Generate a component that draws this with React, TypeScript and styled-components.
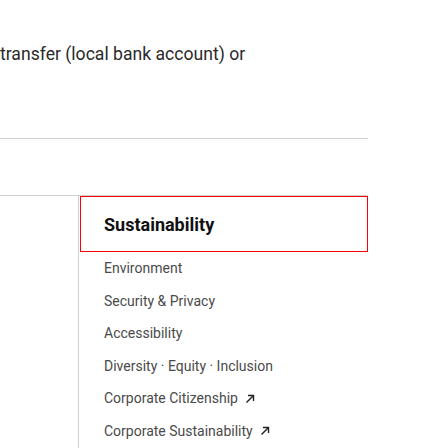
import React from "react";
import styled, { createGlobalStyle } from "styled-components";

const Global = createGlobalStyle`
  html, body { margin: 0; padding: 0; background: #fff; }
  body { font-family: Roboto, "Noto Sans", Arial, sans-serif; }
`;

const Page = styled.div`
  width: 448px;
  height: 448px;
  overflow: hidden;
`;

const Intro = styled.p`
  margin: 0;
  padding-top: 41px;
  height: 138px;
  box-sizing: border-box;
  font-size: 17.6px;
  line-height: 26px;
  color: #2a2a2a;
  white-space: nowrap;
`;

const Rule = styled.hr`
  width: 368px;
  margin: 0;
  border: 0;
  border-top: 1px solid #d0d0d0;
  height: 0;
`;

const Gap = styled.div`
  height: 56px;
`;

const Section = styled.div`
  width: 368px;
  border-top: 1px solid #d0d0d0;
  display: grid;
  grid-template-columns: 79px 1fr;
`;

const Aside = styled.div``;

const Column = styled.div`
  border-left: 1px solid #d0d0d0;
  height: 260px;
  margin-left: -1px;
  display: flex;
  flex-direction: column;
`;

const Heading = styled.div`
  height: 56px;
  box-sizing: border-box;
  border: 1px solid #ff0000;
  margin-left: 1px;
  padding-left: 23px;
  display: flex;
  align-items: center;
  font-size: 18px;
  font-weight: 700;
  color: #111;
`;

const List = styled.ul`
  list-style: none;
  margin: 0;
  padding: 0 0 0 24px;
`;

const Item = styled.li`
  margin-left: 1px;
  font-size: 14px;
  line-height: 32.6px;
  color: #4a4a4a;
  white-space: nowrap;
  display: flex;
  align-items: center;
  gap: 7px;
`;

const Arrow = () => (
  <svg width="10" height="10" viewBox="0 0 10 10" fill="none" stroke="#222" strokeWidth="1.4">
    <path d="M1.5 8.5 L8.5 1.5" />
    <path d="M3 1.5 H8.5 V7" />
  </svg>
);

const items: { label: string; external?: boolean }[] = [
  { label: "Environment" },
  { label: "Security & Privacy" },
  { label: "Accessibility" },
  { label: "Diversity · Equity · Inclusion" },
  { label: "Corporate Citizenship", external: true },
  { label: "Corporate Sustainability", external: true },
];

export default function App() {
  return (
    <Page>
      <Global />
      <Intro>transfer (local bank account) or</Intro>
      <Rule />
      <Gap />
      <Section>
        <Aside />
        <Column>
          <Heading>Sustainability</Heading>
          <List>
            {items.map((it) => (
              <Item key={it.label}>
                {it.label}
                {it.external && <Arrow />}
              </Item>
            ))}
          </List>
        </Column>
      </Section>
    </Page>
  );
}
